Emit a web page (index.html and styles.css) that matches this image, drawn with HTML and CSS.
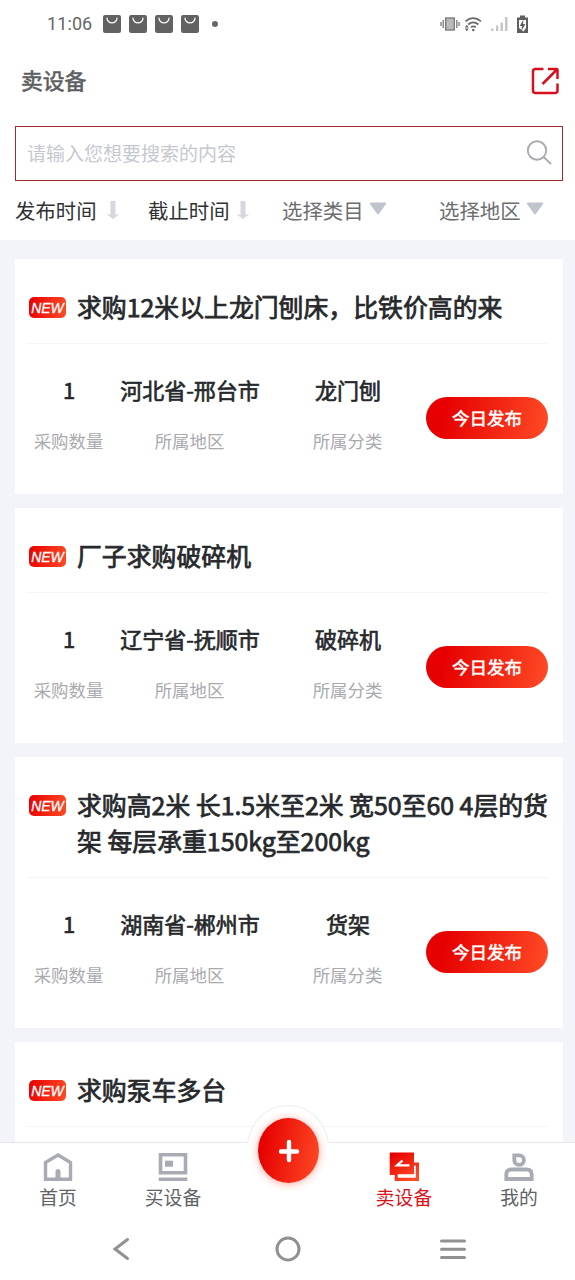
FILE: index.html
```html
<!DOCTYPE html>
<html lang="zh-CN">
<head>
<meta charset="utf-8">
<title>卖设备</title>
<link rel="stylesheet" href="styles.css">
</head>
<body>
<svg class="defs" width="0" height="0">
  <defs>
    <linearGradient id="red" gradientUnits="userSpaceOnUse" x1="4" y1="2" x2="20" y2="29"><stop offset="0" stop-color="#e60000"/><stop offset="1" stop-color="#ff4b26"/></linearGradient>
    <symbol id="bag" viewBox="0 0 18 18"><rect width="18" height="18" rx="2.2" fill="#626262"/><path d="M4 3.2a5 4.6 0 0 0 10 0" fill="none" stroke="#fff" stroke-width="1.3" stroke-linecap="round"/></symbol>
    <symbol id="down" viewBox="0 0 14 20"><path d="M4.5 1h5v13.500h3.800L7 19 .700 14.500h3.800z" fill="#d6d8de"/></symbol>
    <symbol id="caret" viewBox="0 0 18 13"><path d="M1.600.5h14.800q1.400.2.6 1.400L10 11.700q-1 1.200-2 0L1 1.900Q.2.700 1.600.5z" fill="#c0c4cc"/></symbol>
  </defs>
</svg>
<div class="app">
  <div class="status">
    <span class="clock">11:06</span>
    <div class="notes">
      <svg width="18" height="18"><use href="#bag"/></svg>
      <svg width="18" height="18"><use href="#bag"/></svg>
      <svg width="18" height="18"><use href="#bag"/></svg>
      <svg width="18" height="18"><use href="#bag"/></svg>
    </div>
    <i class="dot"></i>
    <svg class="system" width="90" height="20" viewBox="0 0 90 20">
      <g fill="none" stroke="#777" stroke-width="1.300">
        <rect x="5.700" y="4" width="8.600" height="12" fill="#bbb"/>
        <path d="M3.200 6v8M1 8v4M16.800 6v8M19 8v4"/>
      </g>
      <path d="M25.500 7.300q7.500-6.500 15.500 0M28.200 10.500q5-4.200 10.200 0M31 13.300q2.400-1.800 4.800 0" fill="none" stroke="#666" stroke-width="1.700"/>
      <circle cx="33.300" cy="16" r="1.300" fill="#666"/>
      <path d="M26.800 10.800l2 2.700h-4zM26.800 17.200l2-2.700h-4z" fill="#666"/>
      <path d="M51 14.500h2.500v2.500H51zM56 11.500h2.300v5.500H56z" fill="#c6c6c6"/>
      <path d="M60.500 8.500h2.500v8.500h-2.500zM65 3h2.500v14H65z" fill="#c6c6c6"/>
      <path d="M80 1.500h5v2h3V19H77V3.500h3z" fill="#5f5f5f"/>
      <path d="M79 6h7v8l-3 4 0-1-4-3z" fill="#fff"/>
      <path d="M83.400 5.500L79.800 12h2.200l-.5 5L85.300 10h-2.200z" fill="#5f5f5f"/>
    </svg>
  </div>
  <header class="bar">
    <h1>卖设备</h1>
    <svg width="28" height="28" viewBox="0 0 28 28" fill="none" stroke="#d8101d" stroke-width="2.500">
      <path d="M12.500 2H4.500Q2 2 2 4.500V23.500Q2 26 4.500 26H24Q26.500 26 26.500 23.500V16.500"/>
      <path d="M17 2H25.500Q26.500 2 26.500 3V12M26 2.500L11.500 17"/>
    </svg>
  </header>
  <div class="search">
    <span>请输入您想要搜索的内容</span>
    <svg width="26" height="26" viewBox="0 0 26 26" fill="none" stroke="#a9abb0" stroke-width="1.900"><circle cx="11" cy="10.500" r="9.200"/><path d="M17.300 16.800L25 24"/></svg>
  </div>
  <nav class="filters">
    <span class="sort">发布时间<svg width="14" height="20"><use href="#down"/></svg></span>
    <span class="sort due">截止时间<svg width="14" height="20"><use href="#down"/></svg></span>
    <span class="pick">选择类目<svg width="18" height="13"><use href="#caret"/></svg></span>
    <span class="pick area">选择地区<svg width="18" height="13"><use href="#caret"/></svg></span>
  </nav>
  <main class="list">
    <article class="card">
      <div class="head"><span class="new">NEW</span><h2>求购12米以上龙门刨床，比铁价高的来</h2></div>
      <div class="info">
        <dl><dt>1</dt><dd>采购数量</dd></dl>
        <dl><dt>河北省-邢台市</dt><dd>所属地区</dd></dl>
        <dl><dt>龙门刨</dt><dd>所属分类</dd></dl>
        <span class="today">今日发布</span>
      </div>
    </article>
    <article class="card">
      <div class="head"><span class="new">NEW</span><h2>厂子求购破碎机</h2></div>
      <div class="info">
        <dl><dt>1</dt><dd>采购数量</dd></dl>
        <dl><dt>辽宁省-抚顺市</dt><dd>所属地区</dd></dl>
        <dl><dt>破碎机</dt><dd>所属分类</dd></dl>
        <span class="today">今日发布</span>
      </div>
    </article>
    <article class="card">
      <div class="head"><span class="new">NEW</span><h2>求购高2米 长1.5米至2米 宽50至60 4层的货<br>架 每层承重150kg至200kg</h2></div>
      <div class="info">
        <dl><dt>1</dt><dd>采购数量</dd></dl>
        <dl><dt>湖南省-郴州市</dt><dd>所属地区</dd></dl>
        <dl><dt>货架</dt><dd>所属分类</dd></dl>
        <span class="today">今日发布</span>
      </div>
    </article>
    <article class="card">
      <div class="head"><span class="new">NEW</span><h2>求购泵车多台</h2></div>
      <div class="info"></div>
    </article>
  </main>
  <nav class="tabs">
    <a class="tab"><svg width="30" height="30" viewBox="0 0 30 30" fill="none" stroke="#a9abb4" stroke-width="3.400"><path d="M2.500 27.300V10.500L15 3l12.500 7.500v16.800z"/><path d="M15 26v-6.500" stroke-width="5" stroke-linecap="round"/></svg>首页</a>
    <a class="tab"><svg width="30" height="30" viewBox="0 0 30 30" fill="none" stroke="#a9abb4" stroke-width="3.600"><path d="M2.500 2.700h25v18.100h-25zM.7 27.200h28.600"/><path d="M7 8.700h8v6H7z" fill="#a9abb4" stroke="none"/></svg>买设备</a>
    <span class="tab add"><span class="bump"></span><span class="plus"><svg width="22" height="24" viewBox="0 0 22 24" stroke="#fff" stroke-width="4.400" stroke-linecap="round"><path d="M11 3v18M3 12.500h16"/></svg></span></span>
    <a class="tab on"><svg width="30" height="30" viewBox="0 0 30 30"><path fill="url(#red)" d="M.7.5H25v10h5V29H5.700v-6h-5z"/><path d="M8.700 22.300H25V13.500h1.800v12.300H8.700z" fill="#fff"/><path d="M13.500 8.500L8 13.300H20.500" fill="none" stroke="#fff" stroke-width="2.300"/></svg>卖设备</a>
    <a class="tab me"><svg width="30" height="30" viewBox="0 0 30 30" fill="none" stroke="#a9abb4" stroke-width="3.800"><path d="M10.300 3.300h5a4.800 4.800 0 1 1-5 4.800z"/><path d="M2.300 27v-4.500q0-5 5-5h15.400q5 0 5 5V27z"/></svg>我的</a>
  </nav>
  <div class="keys">
    <svg width="18" height="24" viewBox="0 0 18 24"><path d="M15.500 2.500L3 12l12.500 9.500"/></svg>
    <svg class="home" width="26" height="26" viewBox="0 0 26 26"><circle cx="13" cy="13" r="11"/></svg>
    <svg width="26" height="24" viewBox="0 0 26 24"><path d="M1.500 4h23M1.500 12.300h23M1.500 20.600h23"/></svg>
  </div>
</div>
</body>
</html>
```
FILE: styles.css
```css
* { box-sizing: border-box; margin: 0; padding: 0; }
body { font-family: "Noto Sans CJK SC", sans-serif; background: #fff; color: #26282b; }
svg { display: block; flex: none; }
.defs { position: absolute; }
.app { width: 575px; height: 1280px; display: flex; flex-direction: column; overflow: hidden; }

.status { height: 46px; padding: 1px 45px 0 47px; display: flex; align-items: center; flex: none; }
.clock { width: 56px; font: 18px/22px Roboto, sans-serif; color: #666; letter-spacing: .1px; }
.notes { display: flex; gap: 8px; }
.dot { width: 6px; height: 6px; border-radius: 50%; background: #666; margin-left: 13px; }
.system { margin-left: auto; }

.bar { height: 80px; padding: 0 16px 10px 21px; display: flex; align-items: center; justify-content: space-between; flex: none; }
.bar h1 { font-size: 21.8px; line-height: 32px; margin-bottom: 2px; font-weight: 400; color: #5d5e61; -webkit-text-stroke: .6px; }

.search { height: 55px; margin: 0 12px 0 15px; padding: 0 10px 2px 11px; border: 1px solid #a3272d; display: flex; align-items: center; justify-content: space-between; flex: none; font-size: 19px; line-height: 28px; color: #c5c8d0; }

.filters { height: 59px; padding: 0 15px 2px; display: flex; align-items: center; flex: none; font-size: 20.4px; line-height: 30px; color: #303133; }
.filters span { display: flex; align-items: center; }
.sort { width: 133px; gap: 9px; }
.due { gap: 6px; width: 134px; }
.pick { width: 157px; gap: 5px; color: #6b6d71; }
.area { width: auto; }
.pick svg { margin-bottom: 2px; }

.list { flex: 1; min-height: 0; overflow: hidden; background: #f3f4f9; padding: 19px 12px 0 15px; display: flex; flex-direction: column; gap: 14px; }
.card { background: #fff; padding: 29px 15px 0 12px; flex: none; }
.head { display: flex; align-items: flex-start; padding: 0 0 19px 2px; border-bottom: 1px solid #f5f5f7; }
.new { width: 37px; height: 21px; margin: 9px 11px 0 0; border-radius: 5px; flex: none; background: linear-gradient(100deg, #e60000, #ff4b26); color: #fff; font: italic 14px/22px "Liberation Sans", sans-serif; -webkit-text-stroke: .3px; text-align: center; }
h2 { font-size: 24.87px; line-height: 36px; font-weight: 400; white-space: nowrap; -webkit-text-stroke: .75px; }
.info { height: 150px; padding-top: 29px; display: grid; grid-template-columns: 84px 158px 158px 121px; align-items: start; }
dl { text-align: center; }
dt { font-size: 22px; line-height: 32px; font-weight: 400; white-space: nowrap; -webkit-text-stroke: .65px; }
dd { margin: 23px 1px 0 0; font-size: 17.4px; line-height: 26px; color: #a8aaae; }
.today { height: 42px; margin: 24px 0 0 -1px; border-radius: 21px; background: linear-gradient(100deg, #e60000 15%, #ff4b26); color: #fff; font-size: 17.5px; line-height: 42px; font-weight: 400; -webkit-text-stroke: .55px; text-align: center; }

.tabs { height: 78px; border-top: 1px solid #e6e6ea; display: grid; grid-template-columns: repeat(5, 1fr); background: #fff; flex: none; position: relative; }
.tab { display: flex; flex-direction: column; align-items: center; padding: 9px 0 0 1px; font-size: 18.8px; line-height: 28px; gap: 1px; color: #606266; }
.on { color: #dc1018; padding-left: 3px; }
.me { padding-left: 3px; }
.add { position: relative; }
.bump { position: absolute; left: 17px; top: -38px; width: 82px; height: 84px; border-radius: 50%; background: #fff; border: 1px solid #ededf1; clip-path: inset(0 0 46px 0); }
.plus { position: absolute; left: 28px; top: -25px; width: 61px; height: 65px; border-radius: 50%; background: linear-gradient(100deg, #e60000 10%, #ff4b26); box-shadow: 0 1px 8px rgba(255, 60, 30, .45); display: flex; align-items: center; justify-content: center; }
.keys { height: 60px; padding: 0 109px 2px 112px; display: flex; justify-content: space-between; align-items: center; flex: none; }
.keys svg { fill: none; stroke: #919191; stroke-width: 3; stroke-linecap: round; }
.keys .home { margin-left: 6px; }
```
